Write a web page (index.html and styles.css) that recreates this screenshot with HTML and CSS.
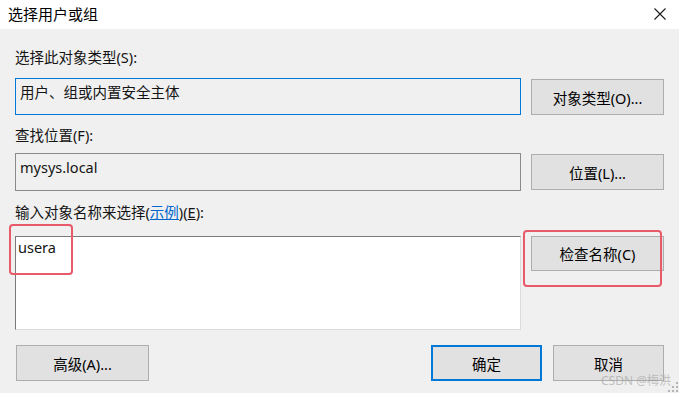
FILE: index.html
```html
<!DOCTYPE html>
<html lang="zh-CN">
<head>
<meta charset="utf-8">
<title>选择用户或组</title>
<link rel="stylesheet" href="styles.css">
</head>
<body>
<div class="dialog">
  <div class="titlebar">
    <span class="title">选择用户或组</span>
    <svg class="close" width="12" height="12" viewBox="0 0 12 12"><path d="M0.5 0.5 L11.5 11.5 M11.5 0.5 L0.5 11.5" stroke="#1a1a1a" stroke-width="1.1" fill="none"/></svg>
  </div>
  <div class="content">
    <div class="label lbl1">选择此对象类型(S):</div>
    <div class="row row1">
      <div class="field field-active">用户、组或内置安全主体</div>
      <div class="btn btn-r1">对象类型(O)...</div>
    </div>
    <div class="label lbl2">查找位置(F):</div>
    <div class="row row2">
      <div class="field field-gray">mysys.local</div>
      <div class="btn btn-r2">位置(L)...</div>
    </div>
    <div class="label lbl3">输入对象名称来选择(<span class="link">示例</span>)(<u>E</u>):</div>
    <div class="row row3">
      <div class="textarea">usera</div>
      <div class="btn btn-r3">检查名称(C)</div>
    </div>
    <div class="bottom">
      <div class="btn btn-adv">高级(A)...</div>
      <div class="spacer"></div>
      <div class="btn btn-ok">确定</div>
      <div class="btn btn-cancel">取消</div>
    </div>
  </div>
  <div class="mark mark1"></div>
  <div class="mark mark2"></div>
  <div class="watermark">CSDN @梅洪</div>
  <svg class="grip" width="13" height="11" viewBox="0 0 13 11">
    <rect x="10" y="0" width="2" height="2" fill="#b4b4b4"/>
    <rect x="6" y="4" width="2" height="2" fill="#b4b4b4"/>
    <rect x="10" y="4" width="2" height="2" fill="#b4b4b4"/>
    <rect x="2" y="8" width="2" height="2" fill="#b4b4b4"/>
    <rect x="6" y="8" width="2" height="2" fill="#b4b4b4"/>
    <rect x="10" y="8" width="2" height="2" fill="#b4b4b4"/>
  </svg>
</div>
</body>
</html>
```
FILE: styles.css
```css
* { box-sizing: border-box; }
html, body { margin: 0; padding: 0; }
body {
  width: 679px;
  height: 393px;
  overflow: hidden;
  background: #f0f0f0;
  font-family: "Noto Sans", "Noto Sans CJK SC", sans-serif;
  font-size: 14.5px;
  color: #141414;
}
.dialog { position: relative; width: 679px; height: 393px; }
.titlebar {
  height: 29px;
  background: #ffffff;
  display: flex;
  align-items: center;
  justify-content: space-between;
  padding: 0 13px 0 8px;
}
.title { font-size: 15px; line-height: 29px; color: #000; }
.close { display: block; margin-top: -2px; }
.content { padding: 18px 15px 0 15px; }
.label { line-height: 20px; height: 20px; white-space: nowrap; }
.lbl1 { margin-bottom: 11px; }
.lbl2 { margin-top: 10px; margin-bottom: 8px; }
.lbl3 { margin-top: 11px; margin-bottom: 14px; }
.link { color: #0066cc; text-decoration: underline; }
.row { display: flex; gap: 10px; align-items: flex-start; }
.field {
  width: 506px;
  padding: 3px 0 0 4px;
  line-height: 20px;
  white-space: nowrap;
}
.field-active { height: 37px; border: 1px solid #0078d7; }
.field-gray { height: 38px; border: 1px solid #8a8a8a; }
.textarea {
  width: 506px;
  height: 94px;
  background: #ffffff;
  border-top: 1px solid #7a7a7a;
  border-left: 1px solid #7a7a7a;
  border-right: 1px solid #dcdcdc;
  border-bottom: 1px solid #dcdcdc;
  padding: 0 0 0 2px;
  line-height: 20px;
}
.btn {
  background: #e1e1e1;
  border: 1px solid #adadad;
  display: flex;
  align-items: center;
  justify-content: center;
  white-space: nowrap;
  color: #000;
}
.btn-r1 { width: 133px; height: 36px; margin-top: 1px; }
.btn-r2 { width: 133px; height: 36px; margin-top: 1px; }
.btn-r3 { width: 133px; height: 35px; }
.bottom { display: flex; margin-top: 15px; height: 36px; }
.btn-adv { width: 133px; height: 36px; margin-left: 1px; }
.spacer { flex: 1; }
.btn-ok { width: 111px; height: 36px; border: 2px solid #0078d7; }
.btn-cancel { width: 111px; height: 36px; margin-left: 11px; }
.mark {
  position: absolute;
  border: 2px solid #e85a6a;
  border-radius: 4px;
}
.mark1 { left: 9px; top: 224px; width: 64px; height: 51px; }
.mark2 { left: 523px; top: 230px; width: 139px; height: 57px; }
.watermark {
  position: absolute;
  left: 601px;
  top: 372px;
  font-size: 12px;
  line-height: 18px;
  color: rgba(150, 150, 150, 0.55);
  white-space: nowrap;
}
.grip { position: absolute; right: 0; bottom: 0; }
```
